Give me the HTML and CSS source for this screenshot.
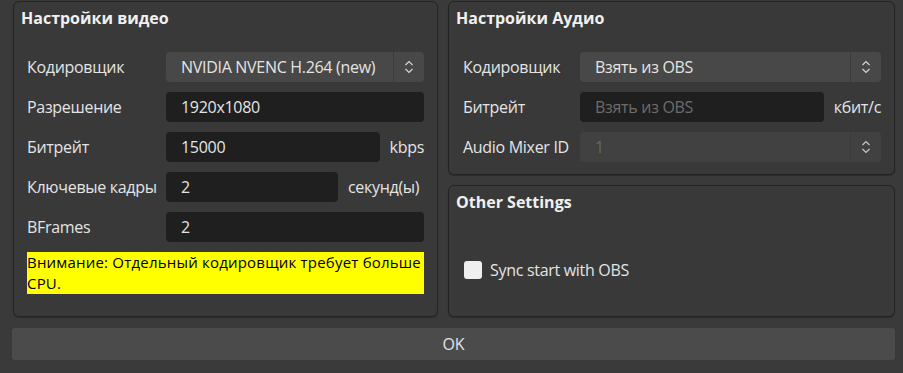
FILE: index.html
```html
<!DOCTYPE html>
<html lang="ru">

<head>
    <meta charset="UTF-8">
    <meta name="viewport" content="width=device-width, initial-scale=1.0">
    <title>Настройки вывода</title>
    <link rel="stylesheet" href="styles.css">
</head>

<body>
    <div class="window">
        <div class="columns">
            <!-- Видео -->
            <section class="group group-video">
                <h2 class="group-title">Настройки видео</h2>
                <div class="form">
                    <div class="row">
                        <span class="label">Кодировщик</span>
                        <div class="combo">
                            <span class="combo-text">NVIDIA NVENC H.264 (new)</span>
                            <span class="combo-arrow">
                                <svg width="10" height="18" viewBox="0 0 10 18"><path d="M1.5 7 L5 3.5 L8.5 7 M1.5 11 L5 14.5 L8.5 11" fill="none" stroke="#d4d4d4" stroke-width="1.2"/></svg>
                            </span>
                        </div>
                    </div>
                    <div class="row">
                        <span class="label">Разрешение</span>
                        <div class="field">1920x1080</div>
                    </div>
                    <div class="row">
                        <span class="label">Битрейт</span>
                        <div class="field">15000</div>
                        <span class="suffix">kbps</span>
                    </div>
                    <div class="row">
                        <span class="label">Ключевые кадры</span>
                        <div class="field">2</div>
                        <span class="suffix suffix-wide">секунд(ы)</span>
                    </div>
                    <div class="row">
                        <span class="label">BFrames</span>
                        <div class="field">2</div>
                    </div>
                    <div class="warning">Внимание: Отдельный кодировщик требует больше CPU.</div>
                </div>
            </section>

            <div class="side">
                <!-- Аудио -->
                <section class="group group-audio">
                    <h2 class="group-title">Настройки Аудио</h2>
                    <div class="form">
                        <div class="row">
                            <span class="label">Кодировщик</span>
                            <div class="combo">
                                <span class="combo-text">Взять из OBS</span>
                                <span class="combo-arrow">
                                    <svg width="10" height="18" viewBox="0 0 10 18"><path d="M1.5 7 L5 3.5 L8.5 7 M1.5 11 L5 14.5 L8.5 11" fill="none" stroke="#d4d4d4" stroke-width="1.2"/></svg>
                                </span>
                            </div>
                        </div>
                        <div class="row">
                            <span class="label">Битрейт</span>
                            <div class="field placeholder">Взять из OBS</div>
                            <span class="suffix">кбит/с</span>
                        </div>
                        <div class="row">
                            <span class="label">Audio Mixer ID</span>
                            <div class="combo disabled">
                                <span class="combo-text">1</span>
                                <span class="combo-arrow">
                                    <svg width="10" height="18" viewBox="0 0 10 18"><path d="M1.5 7 L5 3.5 L8.5 7 M1.5 11 L5 14.5 L8.5 11" fill="none" stroke="#c8c8c8" stroke-width="1.2"/></svg>
                                </span>
                            </div>
                        </div>
                    </div>
                </section>

                <!-- Прочее -->
                <section class="group group-other">
                    <h2 class="group-title">Other Settings</h2>
                    <label class="check">
                        <span class="check-box"></span>
                        <span>Sync start with OBS</span>
                    </label>
                </section>
            </div>
        </div>

        <button class="ok" type="button">OK</button>
    </div>
</body>

</html>
```

FILE: styles.css
```css
body {
    margin: 0;
    background-color: #3a3a3a;
    font-family: 'Open Sans', 'Noto Sans', sans-serif;
    font-size: 16px;
    color: #e4e4e4;
}

.window {
    padding: 1px 8px 0 12px;
}

.columns {
    display: grid;
    grid-template-columns: 425px 447px;
    gap: 10px;
    padding-left: 1px;
}

.group {
    background-color: #393939;
    border: 1px solid #242424;
    border-radius: 6px;
    box-shadow: 0 1px 1px rgba(0, 0, 0, 0.25);
}

.group-title {
    margin: 0;
    padding: 6px 0 0 7px;
    font-size: 16px;
    font-weight: 700;
    line-height: 20px;
    color: #f0f0f0;
}

.form {
    display: flex;
    flex-direction: column;
    gap: 10px;
    margin-top: 24px;
    padding: 0 13px 0 13px;
}

.group-video .form {
    padding-bottom: 22px;
}

.group-audio .form {
    padding: 0 13px 12px 14px;
}

.row {
    display: flex;
    align-items: center;
    height: 30px;
}

.label {
    flex: none;
    width: 139px;
    letter-spacing: -0.3px;
}

.group-audio .label {
    width: 117px;
}

.field {
    flex: 1;
    height: 30px;
    line-height: 30px;
    padding-left: 15px;
    background-color: #1f1f1f;
    border-radius: 4px;
    letter-spacing: -0.3px;
}

.field.placeholder {
    color: #6c6c6c;
}

.suffix {
    flex: none;
    margin-left: 10px;
    letter-spacing: -0.3px;
}

.suffix-wide {
    width: 76px;
}

.combo {
    flex: 1;
    display: flex;
    height: 30px;
    background-color: #484848;
    border-radius: 4px;
}

.combo-text {
    flex: 1;
    line-height: 30px;
    padding-left: 15px;
    letter-spacing: -0.3px;
}

.combo-arrow {
    flex: none;
    width: 30px;
    display: flex;
    align-items: center;
    justify-content: center;
    border-left: 1px solid #3b3b3b;
}

.combo.disabled {
    background-color: #414141;
}

.combo.disabled .combo-text {
    color: #666;
}

.warning {
    background-color: #ffff00;
    color: #000;
    font-size: 15px;
    line-height: 21px;
    letter-spacing: 0.2px;
}

.side {
    display: flex;
    flex-direction: column;
    gap: 10px;
}

.group-other {
    flex: 1;
}

.check {
    display: flex;
    align-items: center;
    gap: 8px;
    margin: 47px 0 0 15px;
    letter-spacing: -0.3px;
}

.check-box {
    width: 18px;
    height: 18px;
    background-color: #efefef;
    border-radius: 3px;
}

.ok {
    display: block;
    width: 883px;
    height: 32px;
    margin-top: 11px;
    background-color: #4b4b4b;
    border: none;
    border-radius: 3px;
    font-family: 'Open Sans', 'Noto Sans', sans-serif;
    font-size: 16px;
    color: #e4e4e4;
}
```
